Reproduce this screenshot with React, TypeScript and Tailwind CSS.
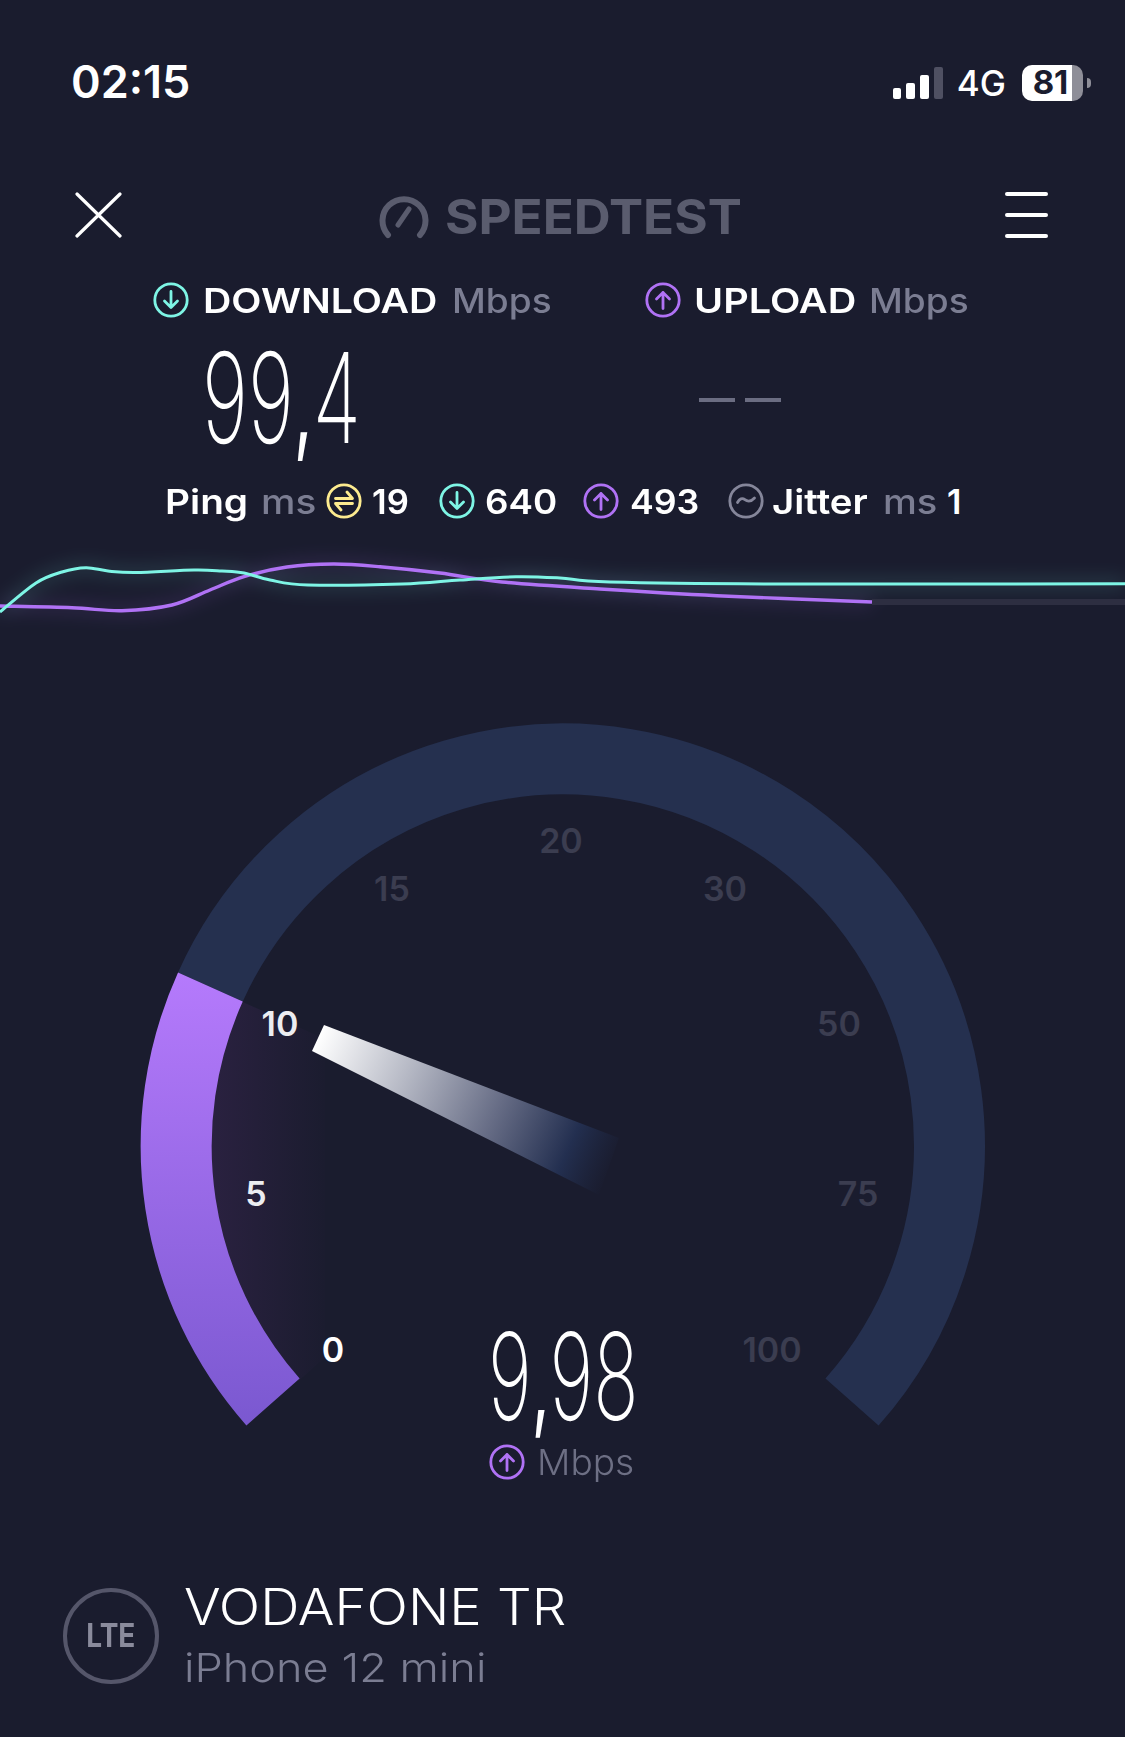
type Point = [number, number];

// smooth line through the sampled points
function smoothPath(points: Point[]) {
  let d = `M${points[0][0]} ${points[0][1]}`;
  for (let i = 0; i < points.length - 1; i++) {
    const p0 = points[Math.max(i - 1, 0)];
    const p1 = points[i];
    const p2 = points[i + 1];
    const p3 = points[Math.min(i + 2, points.length - 1)];
    const c1x = p1[0] + (p2[0] - p0[0]) / 6;
    const c1y = p1[1] + (p2[1] - p0[1]) / 6;
    const c2x = p2[0] - (p3[0] - p1[0]) / 6;
    const c2y = p2[1] - (p3[1] - p1[1]) / 6;
    d += `C${c1x} ${c1y} ${c2x} ${c2y} ${p2[0]} ${p2[1]}`;
  }
  return d;
}

const TEAL_LINE: Point[] = [
  [0, 612], [36, 583], [62, 572], [86, 567.7], [108, 571], [136, 572.5], [194, 570], [222, 571], [244, 573],
  [270, 580], [308, 585], [402, 584], [460, 580], [516, 576.7], [560, 578], [610, 582], [789, 584], [1125, 583.7],
];

const PURPLE_LINE: Point[] = [
  [0, 606], [72, 607.7], [122, 610.7], [172, 605], [210, 590], [244, 576.7], [287, 567], [333.6, 564],
  [380, 566.7], [440, 573], [502, 582], [600, 589], [717, 595.7], [872, 602],
];

function CircleIcon({ color, children }: { color: string; children: React.ReactNode }) {
  return (
    <svg width="36" height="36" viewBox="0 0 36 36" fill="none" stroke={color} strokeWidth="2.8" strokeLinecap="round" strokeLinejoin="round" className="shrink-0">
      <circle cx="18" cy="18" r="16.2" />
      {children}
    </svg>
  );
}

const DownIcon = () => (
  <CircleIcon color="#7ef5e5">
    <path d="M18 9.5v16M11.5 19l6.5 6.5 6.5-6.5" />
  </CircleIcon>
);

const UpIcon = () => (
  <CircleIcon color="#b072f5">
    <path d="M18 26.5v-16M11.5 17l6.5-6.5 6.5 6.5" />
  </CircleIcon>
);

const PingIcon = () => (
  <CircleIcon color="#fdeb8f">
    <path d="M9.5 15.5h17L21 9M26.5 20.5h-17L15 27" />
  </CircleIcon>
);

const JitterIcon = () => (
  <CircleIcon color="#85869a">
    <path d="M9.5 19.5c2-3.8 4.8-4.8 7.4-2.8 2.6 2 5.6 2.6 9.6-1.7" />
  </CircleIcon>
);

// text set wider than Inter draws it; box keeps the real width in the flow
function Wide({ box, stretch, children }: { box: string; stretch: string; children: React.ReactNode }) {
  return (
    <span className={`inline-block shrink-0 ${box}`}>
      <span className={`inline-block origin-left whitespace-nowrap ${stretch}`}>{children}</span>
    </span>
  );
}

const TICKS = [
  { label: "20", className: "left-[561px] top-[201px] text-[#3b3d50]" },
  { label: "15", className: "left-[392px] top-[249px] text-[#3b3d50]" },
  { label: "30", className: "left-[725px] top-[249px] text-[#3b3d50]" },
  { label: "10", className: "left-[280px] top-[384px] text-[#ecedf1]" },
  { label: "50", className: "left-[839px] top-[384px] text-[#3b3d50]" },
  { label: "5", className: "left-[256px] top-[554px] text-[#ecedf1]" },
  { label: "75", className: "left-[858px] top-[554px] text-[#3b3d50]" },
  { label: "0", className: "left-[333px] top-[710px] text-white" },
  { label: "100", className: "left-[772px] top-[710px] text-[#3b3d50]" },
];

function Gauge() {
  return (
    <div className="relative h-[930px] w-full">
      <svg width="1125" height="930" viewBox="0 640 1125 930" fill="none" className="block">
        <defs>
          <linearGradient id="purple" gradientUnits="userSpaceOnUse" x1="0" y1="973" x2="0" y2="1427">
            <stop offset="0" stopColor="#b57afc" />
            <stop offset="1" stopColor="#7a58d0" />
          </linearGradient>
          <linearGradient id="ghost" gradientUnits="userSpaceOnUse" x1="210" y1="0" x2="325" y2="0">
            <stop offset="0" stopColor="#2a2140" />
            <stop offset="0.998" stopColor="#1b1c2f" />
            <stop offset="1" stopColor="#1a1c2e" stopOpacity="0" />
          </linearGradient>
          <linearGradient id="needle" gradientUnits="userSpaceOnUse" x1="318" y1="1038" x2="612" y2="1170">
            <stop offset="0" stopColor="#ffffff" />
            <stop offset="0.3" stopColor="#b5b8c4" />
            <stop offset="0.6" stopColor="#666c85" />
            <stop offset="0.85" stopColor="#232f50" />
            <stop offset="1" stopColor="#1f2a48" stopOpacity="0" />
          </linearGradient>
        </defs>
        <path d="M210.4 987A386.5 386.5 0 1 1 852 1402" stroke="#25304f" strokeWidth="71" />
        <path d="M240.5 1001L562.5 1146L298.4 1381A352 352 0 0 1 240.5 1001Z" fill="url(#ghost)" />
        <path d="M273 1402A386.5 386.5 0 0 1 210.4 987" stroke="url(#purple)" strokeWidth="71" />
        <polygon points="324,1025 619,1138 599,1195 312,1051" fill="url(#needle)" />
      </svg>
      {TICKS.map((t) => (
        <span
          key={t.label}
          className={`absolute -translate-x-1/2 -translate-y-1/2 text-[34px] leading-none font-semibold ${t.className}`}
        >
          {t.label}
        </span>
      ))}
      <div className="absolute left-[488px] top-[680px] h-[112px] w-[146px] text-[121px] leading-[112px] font-[150] text-white">
        <span className="inline-block origin-left scale-x-[0.62] whitespace-nowrap">
          9<span className="text-[100px] font-normal">,</span>98
        </span>
      </div>
      <div className="absolute left-[489px] top-[802px] flex items-center gap-[12px] text-[36px] leading-[40px] font-light text-[#6d6f84]">
        <UpIcon />
        <Wide box="w-[96px]" stretch="scale-x-[1.03]">Mbps</Wide>
      </div>
    </div>
  );
}

function Graph() {
  const teal = smoothPath(TEAL_LINE);
  const purple = smoothPath(PURPLE_LINE);
  return (
    <svg width="1125" height="100" viewBox="0 540 1125 100" fill="none" className="block">
      <defs>
        <filter id="glow" x="-10%" y="-100%" width="120%" height="300%">
          <feGaussianBlur stdDeviation="9" />
        </filter>
      </defs>
      <g filter="url(#glow)" opacity="0.2" strokeWidth="8">
        <path d={teal} stroke="#7ef5e5" />
        <path d={purple} stroke="#b072f5" />
      </g>
      <path d="M872 602H1125" stroke="#2d2e41" strokeWidth="6" />
      <path d={purple} stroke="#b072f5" strokeWidth="3.4" />
      <path d={teal} stroke="#7ef5e5" strokeWidth="3" />
    </svg>
  );
}

export default function App() {
  return (
    <div className="h-[1737px] w-[1125px] overflow-hidden bg-[#1a1c2e] font-['Inter',sans-serif] text-white">
      {/* status bar */}
      <div className="flex h-[162px] items-start justify-between pt-[53px] pl-[71px] pr-[34px]">
        <span className="text-[45px] leading-[58px] font-semibold">02:15</span>
        <div className="flex items-center pt-[12px]">
          <div className="flex items-end gap-[5px]">
            <div className="h-[11px] w-[8px] rounded-[2px] bg-white" />
            <div className="h-[16px] w-[9px] rounded-[2px] bg-white" />
            <div className="h-[24px] w-[9px] rounded-[2px] bg-white" />
            <div className="h-[32px] w-[9px] rounded-[2px] bg-[#4f5062]" />
          </div>
          <span className="ml-[14px] text-[35px] leading-[36px] font-medium">4G</span>
          <div className="ml-[16px] flex h-[36px] w-[61px] items-center justify-center rounded-[10px] bg-[linear-gradient(90deg,#ffffff_82%,#8e8e98_82%)] pr-[4px] text-[33px] font-bold text-[#1a1c2e]">
            81
          </div>
          <div className="ml-[4px] h-[10px] w-[4px] rounded-r-full bg-[#8e8e98]" />
        </div>
      </div>

      {/* header */}
      <div className="flex h-[106px] items-center justify-between pl-[75px] pr-[77px]">
        <svg width="47" height="46" viewBox="0 0 47 46" stroke="white" strokeWidth="3.2" strokeLinecap="round">
          <path d="M2 2l43 42M45 2L2 44" />
        </svg>
        <div className="mt-[4px] mr-[10px] flex items-center gap-[16px] text-[#5a5c6e]">
          <svg width="50" height="44" viewBox="0 0 50 44" fill="none" stroke="#5a5c6e" strokeWidth="6" strokeLinecap="round" className="shrink-0">
            <path d="M9 40A21.5 21.5 0 1 1 41 40" />
            <path d="M19 30L30 14" strokeWidth="5" />
          </svg>
          <Wide box="w-[294px] text-[48px] leading-[50px] font-bold" stretch="scale-x-[1.065]">SPEEDTEST</Wide>
        </div>
        <div className="flex w-[43px] flex-col gap-[17px]">
          <div className="h-[4px] rounded-full bg-white" />
          <div className="h-[4px] rounded-full bg-white" />
          <div className="h-[4px] rounded-full bg-white" />
        </div>
      </div>

      {/* speed labels */}
      <div className="flex h-[64px] items-center pl-[153px] text-[34px] font-semibold">
        <DownIcon />
        <Wide box="ml-[14px] w-[233px]" stretch="scale-x-[1.155]">DOWNLOAD</Wide>
        <Wide box="ml-[16px] w-[99px] font-medium text-[#7b7d92]" stretch="scale-x-[1.09]">Mbps</Wide>
        <div className="ml-[94px]">
          <UpIcon />
        </div>
        <Wide box="ml-[13px] w-[160px]" stretch="scale-x-[1.165]">UPLOAD</Wide>
        <Wide box="ml-[15px] w-[99px] font-medium text-[#7b7d92]" stretch="scale-x-[1.09]">Mbps</Wide>
      </div>

      {/* speed values */}
      <div className="flex h-[130px] items-center pl-[202px]">
        <span className="inline-block w-[497px] text-[125px] leading-none font-[150]">
          <span className="inline-block origin-left scale-x-[0.63] whitespace-nowrap">
            99<span className="text-[104px] font-normal">,</span>4
          </span>
        </span>
        <div className="mt-[6px] flex gap-[10px]">
          <div className="h-[4px] w-[36px] bg-[#6b6d82]" />
          <div className="h-[4px] w-[36px] bg-[#6b6d82]" />
        </div>
      </div>

      {/* ping row */}
      <div className="flex h-[78px] items-center pl-[165px] text-[34px] font-semibold whitespace-nowrap">
        <Wide box="w-[82px]" stretch="scale-x-[1.14]">Ping</Wide>
        <Wide box="ml-[14px] w-[53px] font-medium text-[#7b7d92]" stretch="scale-x-[1.14]">ms</Wide>
        <div className="ml-[12px]">
          <PingIcon />
        </div>
        <Wide box="ml-[10px] w-[35px]" stretch="scale-x-[1.02]">19</Wide>
        <div className="ml-[32px]">
          <DownIcon />
        </div>
        <Wide box="ml-[10px] w-[69px]" stretch="scale-x-[1.08]">640</Wide>
        <div className="ml-[29px]">
          <UpIcon />
        </div>
        <Wide box="ml-[11px] w-[66px]" stretch="scale-x-[1.05]">493</Wide>
        <div className="ml-[32px]">
          <JitterIcon />
        </div>
        <Wide box="ml-[8px] w-[95px]" stretch="scale-x-[1.13]">Jitter</Wide>
        <Wide box="ml-[16px] w-[52px] font-medium text-[#7b7d92]" stretch="scale-x-[1.12]">ms</Wide>
        <span className="ml-[12px]">1</span>
      </div>

      <Graph />
      <Gauge />

      {/* footer */}
      <div className="mt-[8px] flex items-center pl-[63px]">
        <div className="mb-[4px] flex h-[96px] w-[96px] items-center justify-center rounded-full border-[4px] border-[#55566a] text-[33px] font-bold text-[#8a8b9c]">
          <span className="inline-block scale-x-[0.85]">LTE</span>
        </div>
        <div className="ml-[25px] flex flex-col">
          <Wide box="w-[381px] text-[50px] leading-[58px] font-light" stretch="scale-x-[1.09]">VODAFONE TR</Wide>
          <Wide box="mt-[3px] w-[301px] text-[40px] leading-[58px] font-light text-[#7b7d92]" stretch="scale-x-[1.127]">iPhone 12 mini</Wide>
        </div>
      </div>
    </div>
  );
}
